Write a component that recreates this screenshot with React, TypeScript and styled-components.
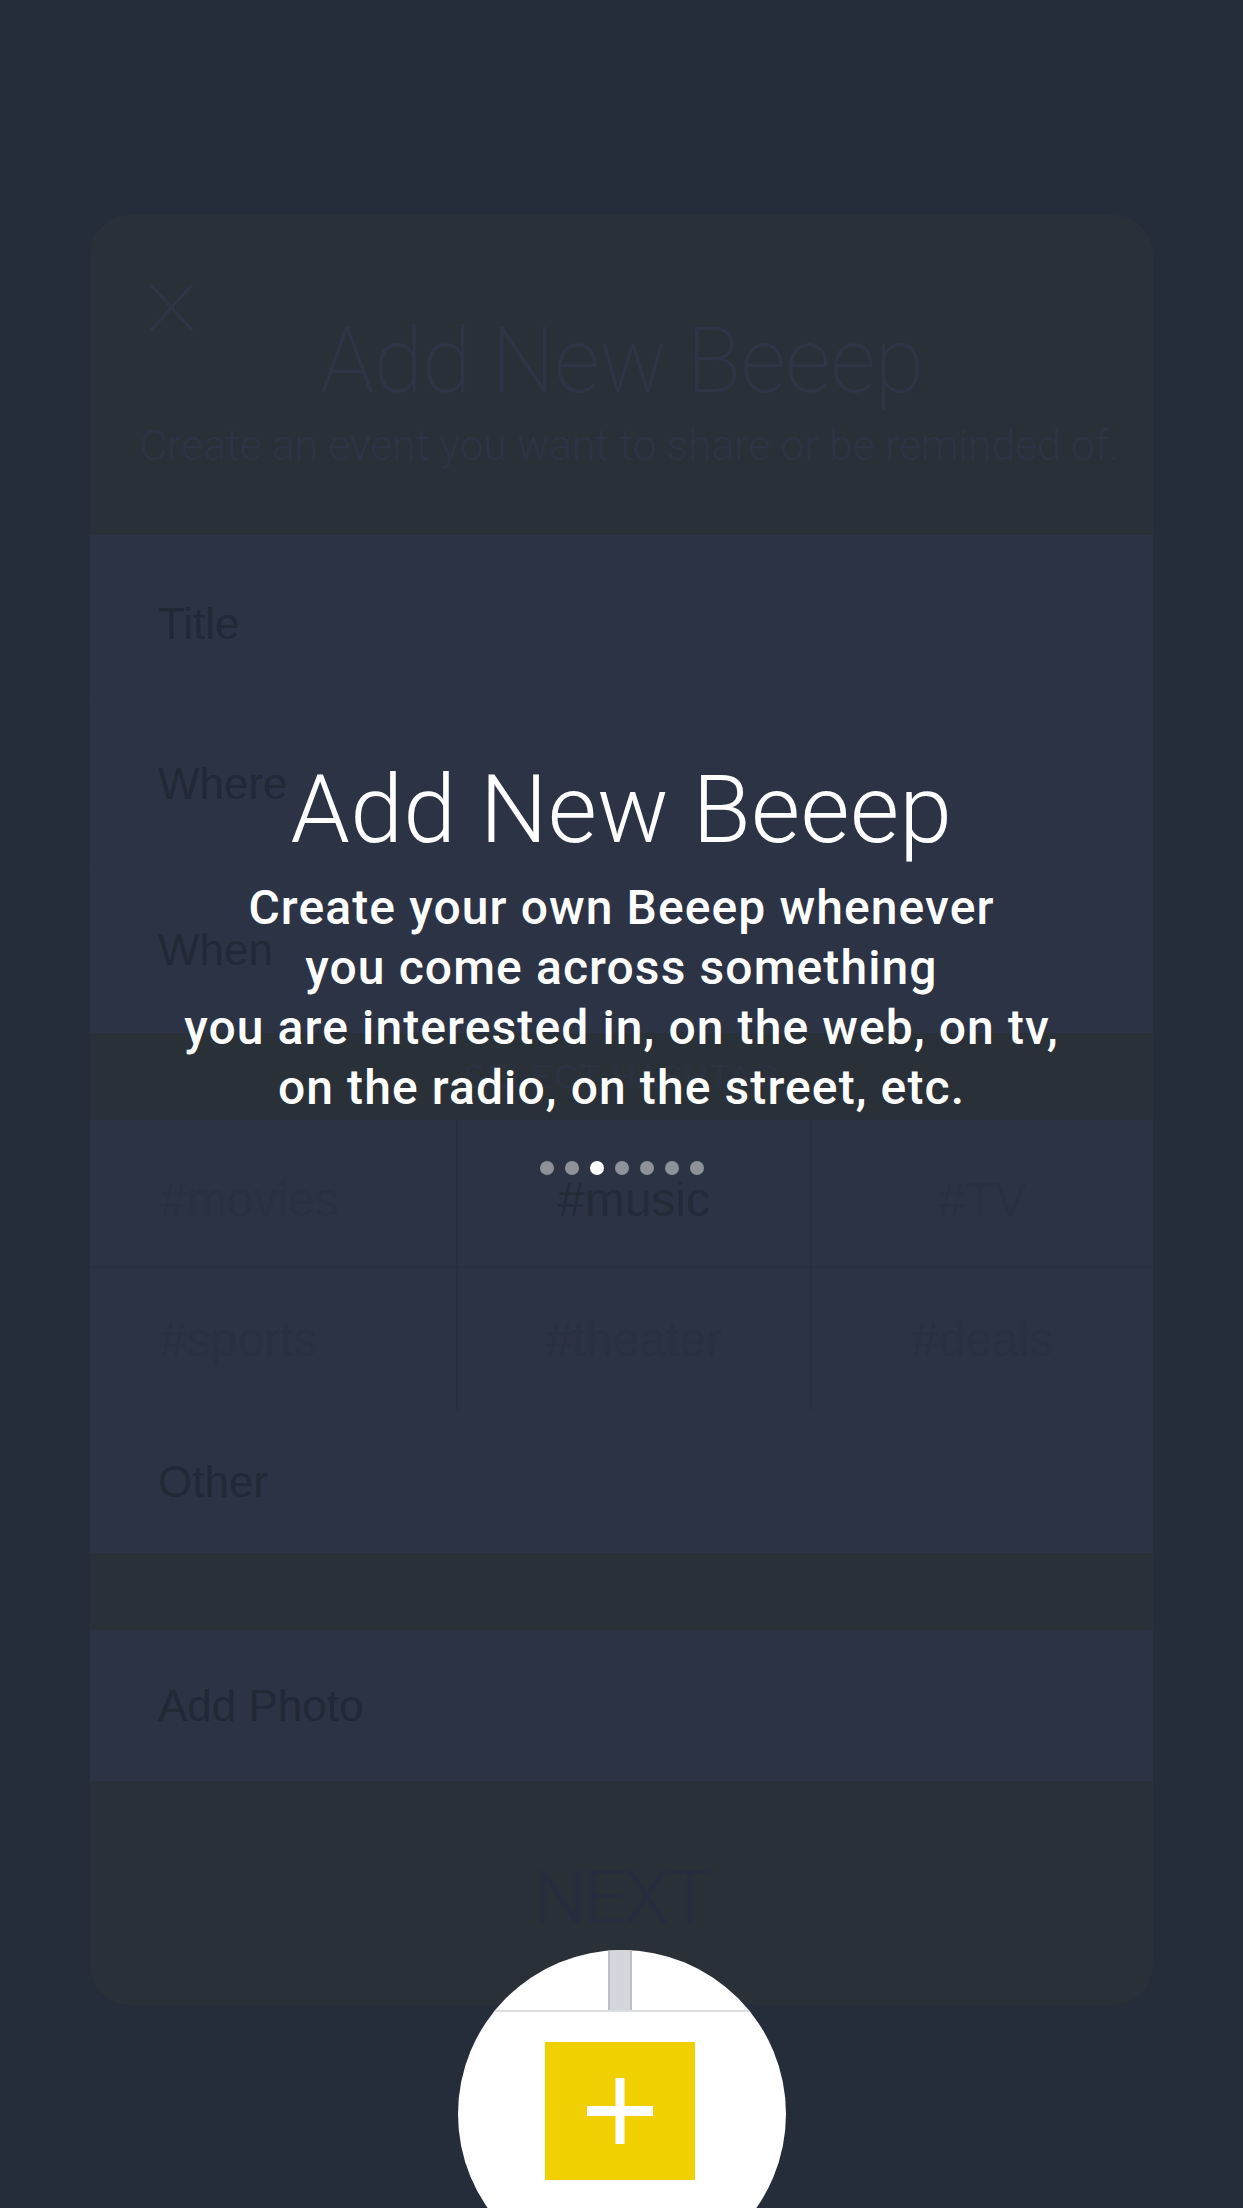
import React from "react";
import styled, { createGlobalStyle } from "styled-components";

const GlobalStyle = createGlobalStyle`
  html, body {
    margin: 0;
    padding: 0;
    background: #252c3a;
  }
  body {
    font-family: "Liberation Sans", Arial, sans-serif;
  }
  * { box-sizing: border-box; }
`;

const Page = styled.div`
  position: relative;
  width: 100%;
  height: 2208px;
  overflow: hidden;
  padding-top: 215px;
  background: #252c3a;
`;

const Card = styled.div`
  width: 1063px;
  margin: 0 auto;
  border-radius: 40px;
  overflow: hidden;
  background: #2c3345;
  display: flex;
  flex-direction: column;
`;

const Header = styled.div`
  height: 320px;
  background: #2a3038;
  display: grid;
  grid-template-columns: 1fr;
  align-content: start;
  padding-top: 68px;
`;

const CloseIcon = styled.svg`
  grid-area: 1 / 1;
  justify-self: start;
  margin-left: 59px;
  width: 45px;
  height: 49px;
`;

const HeaderTitle = styled.h1`
  grid-area: 1 / 1;
  margin: 34px 0 0;
  text-align: center;
  font-family: Roboto, "Liberation Sans", sans-serif;
  font-weight: 200;
  font-size: 90px;
  line-height: 1;
  letter-spacing: -1px;
  color: #2e3547;
`;

const HeaderSub = styled.p`
  grid-area: 2 / 1;
  margin: 18px 0 0;
  padding-left: 16px;
  text-align: center;
  font-family: Roboto, "Liberation Sans", sans-serif;
  font-weight: 300;
  font-size: 42.5px;
  line-height: 1;
  color: #2d3446;
`;

const FieldRow = styled.div<{ $h: number; $line?: boolean; $shift?: number }>`
  height: ${(p) => p.$h}px;
  display: flex;
  align-items: center;
  padding-left: 68px;
  padding-top: ${(p) => p.$shift ?? 0}px;
  font-size: 44px;
  color: #212836;
  border-bottom: ${(p) => (p.$line ? "1px solid #2a3141" : "none")};
`;

const Band = styled.div<{ $h: number }>`
  height: ${(p) => p.$h}px;
  background: #2a3038;
  display: flex;
  align-items: center;
  justify-content: center;
  font-size: 34px;
  color: #2b3241;
  letter-spacing: 1px;
`;

const TagGrid = styled.div`
  display: grid;
  grid-template-columns: 368px 354px 1fr;
  grid-template-rows: 148px 142px;
`;

const TagCell = styled.div<{ $left?: boolean; $last?: boolean; $top?: boolean }>`
  display: flex;
  align-items: center;
  justify-content: ${(p) => (p.$left ? "flex-start" : "center")};
  padding-left: ${(p) => (p.$left ? "70px" : "0")};
  padding-top: ${(p) => (p.$top ? "12px" : "0")};
  border-right: ${(p) => (p.$last ? "none" : "2px solid #283040")};
  border-bottom: ${(p) => (p.$top ? "2px solid #29303f" : "none")};
`;

const TagText = styled.span<{ $on?: boolean }>`
  font-size: 48px;
  color: ${(p) => (p.$on ? "#232a38" : "#29303f")};
`;

const NextSection = styled.div`
  height: 224px;
  background: #2a3038;
  display: flex;
  align-items: center;
  justify-content: center;
  padding-top: 8px;
  font-family: Roboto, "Liberation Sans", sans-serif;
  font-weight: 300;
  font-size: 74px;
  letter-spacing: -2px;
  color: #262d3f;
`;

const Overlay = styled.div`
  position: absolute;
  top: 762px;
  left: 0;
  right: 0;
  display: flex;
  flex-direction: column;
  align-items: center;
  color: #ffffff;
  pointer-events: none;
`;

const OverlayTitle = styled.h2`
  margin: 0;
  font-family: Roboto, "Liberation Sans", sans-serif;
  font-weight: 300;
  font-size: 95px;
  line-height: 1;
  letter-spacing: 0.3px;
`;

const OverlayText = styled.p`
  margin: 21px 0 0;
  text-align: center;
  font-family: Roboto, "Liberation Sans", sans-serif;
  font-weight: 500;
  font-size: 48px;
  line-height: 60px;
  letter-spacing: 1.1px;
`;

const Dots = styled.div`
  margin-top: 43px;
  display: flex;
  gap: 11px;
`;

const Dot = styled.span<{ $on?: boolean }>`
  width: 14px;
  height: 14px;
  border-radius: 50%;
  background: ${(p) => (p.$on ? "#ffffff" : "#8e9298")};
`;

const Spotlight = styled.div`
  position: absolute;
  top: 1950px;
  left: 50%;
  width: 328px;
  height: 328px;
  margin-left: -164px;
  border-radius: 50%;
  background: #ffffff;
  overflow: hidden;
  display: flex;
  flex-direction: column;
  align-items: center;
`;

const TabStrip = styled.div`
  height: 62px;
  width: 100%;
  display: flex;
  justify-content: center;
  border-bottom: 2px solid #dcdde0;
`;

const TabBar = styled.div`
  width: 24px;
  height: 100%;
  margin-left: -4px;
  background: #d3d6db;
  border-left: 2px solid #bcc0c6;
  border-right: 2px solid #bcc0c6;
`;

const AddButton = styled.div`
  margin-top: 30px;
  margin-left: -4px;
  width: 150px;
  height: 138px;
  background: #f0d000;
  display: flex;
  align-items: center;
  justify-content: center;
`;

const PlusIcon = styled.svg`
  width: 66px;
  height: 66px;
`;

export default function App() {
  return (
    <>
      <GlobalStyle />
      <Page>
        <Card>
          <Header>
            <CloseIcon viewBox="0 0 45 49">
              <path d="M2 2 L43 47 M43 2 L2 47" stroke="#2e3547" strokeWidth="3" fill="none" />
            </CloseIcon>
            <HeaderTitle>Add New Beeep</HeaderTitle>
            <HeaderSub>Create an event you want to share or be reminded of.</HeaderSub>
          </Header>
          <FieldRow $h={166} $line $shift={12}>Title</FieldRow>
          <FieldRow $h={166} $line>Where</FieldRow>
          <FieldRow $h={166}>When</FieldRow>
          <Band $h={87}>SELECT HASHTAG</Band>
          <TagGrid>
            <TagCell $left $top>
              <TagText>#movies</TagText>
            </TagCell>
            <TagCell $top>
              <TagText $on>#music</TagText>
            </TagCell>
            <TagCell $top $last>
              <TagText>#TV</TagText>
            </TagCell>
            <TagCell $left>
              <TagText>#sports</TagText>
            </TagCell>
            <TagCell>
              <TagText>#theater</TagText>
            </TagCell>
            <TagCell $last>
              <TagText>#deals</TagText>
            </TagCell>
          </TagGrid>
          <FieldRow $h={143}>Other</FieldRow>
          <Band $h={77} />
          <FieldRow $h={151}>Add Photo</FieldRow>
          <NextSection>NEXT</NextSection>
        </Card>

        <Overlay>
          <OverlayTitle>Add New Beeep</OverlayTitle>
          <OverlayText>
            Create your own Beeep whenever
            <br />
            you come across something
            <br />
            you are interested in, on the web, on tv,
            <br />
            on the radio, on the street, etc.
          </OverlayText>
          <Dots>
            {[0, 1, 2, 3, 4, 5, 6].map((i) => (
              <Dot key={i} $on={i === 2} />
            ))}
          </Dots>
        </Overlay>

        <Spotlight>
          <TabStrip>
            <TabBar />
          </TabStrip>
          <AddButton>
            <PlusIcon viewBox="0 0 66 66">
              <rect x="28.5" y="0" width="9" height="66" fill="#ffffff" />
              <rect x="0" y="28" width="66" height="10" fill="#ffffff" />
            </PlusIcon>
          </AddButton>
        </Spotlight>
      </Page>
    </>
  );
}
